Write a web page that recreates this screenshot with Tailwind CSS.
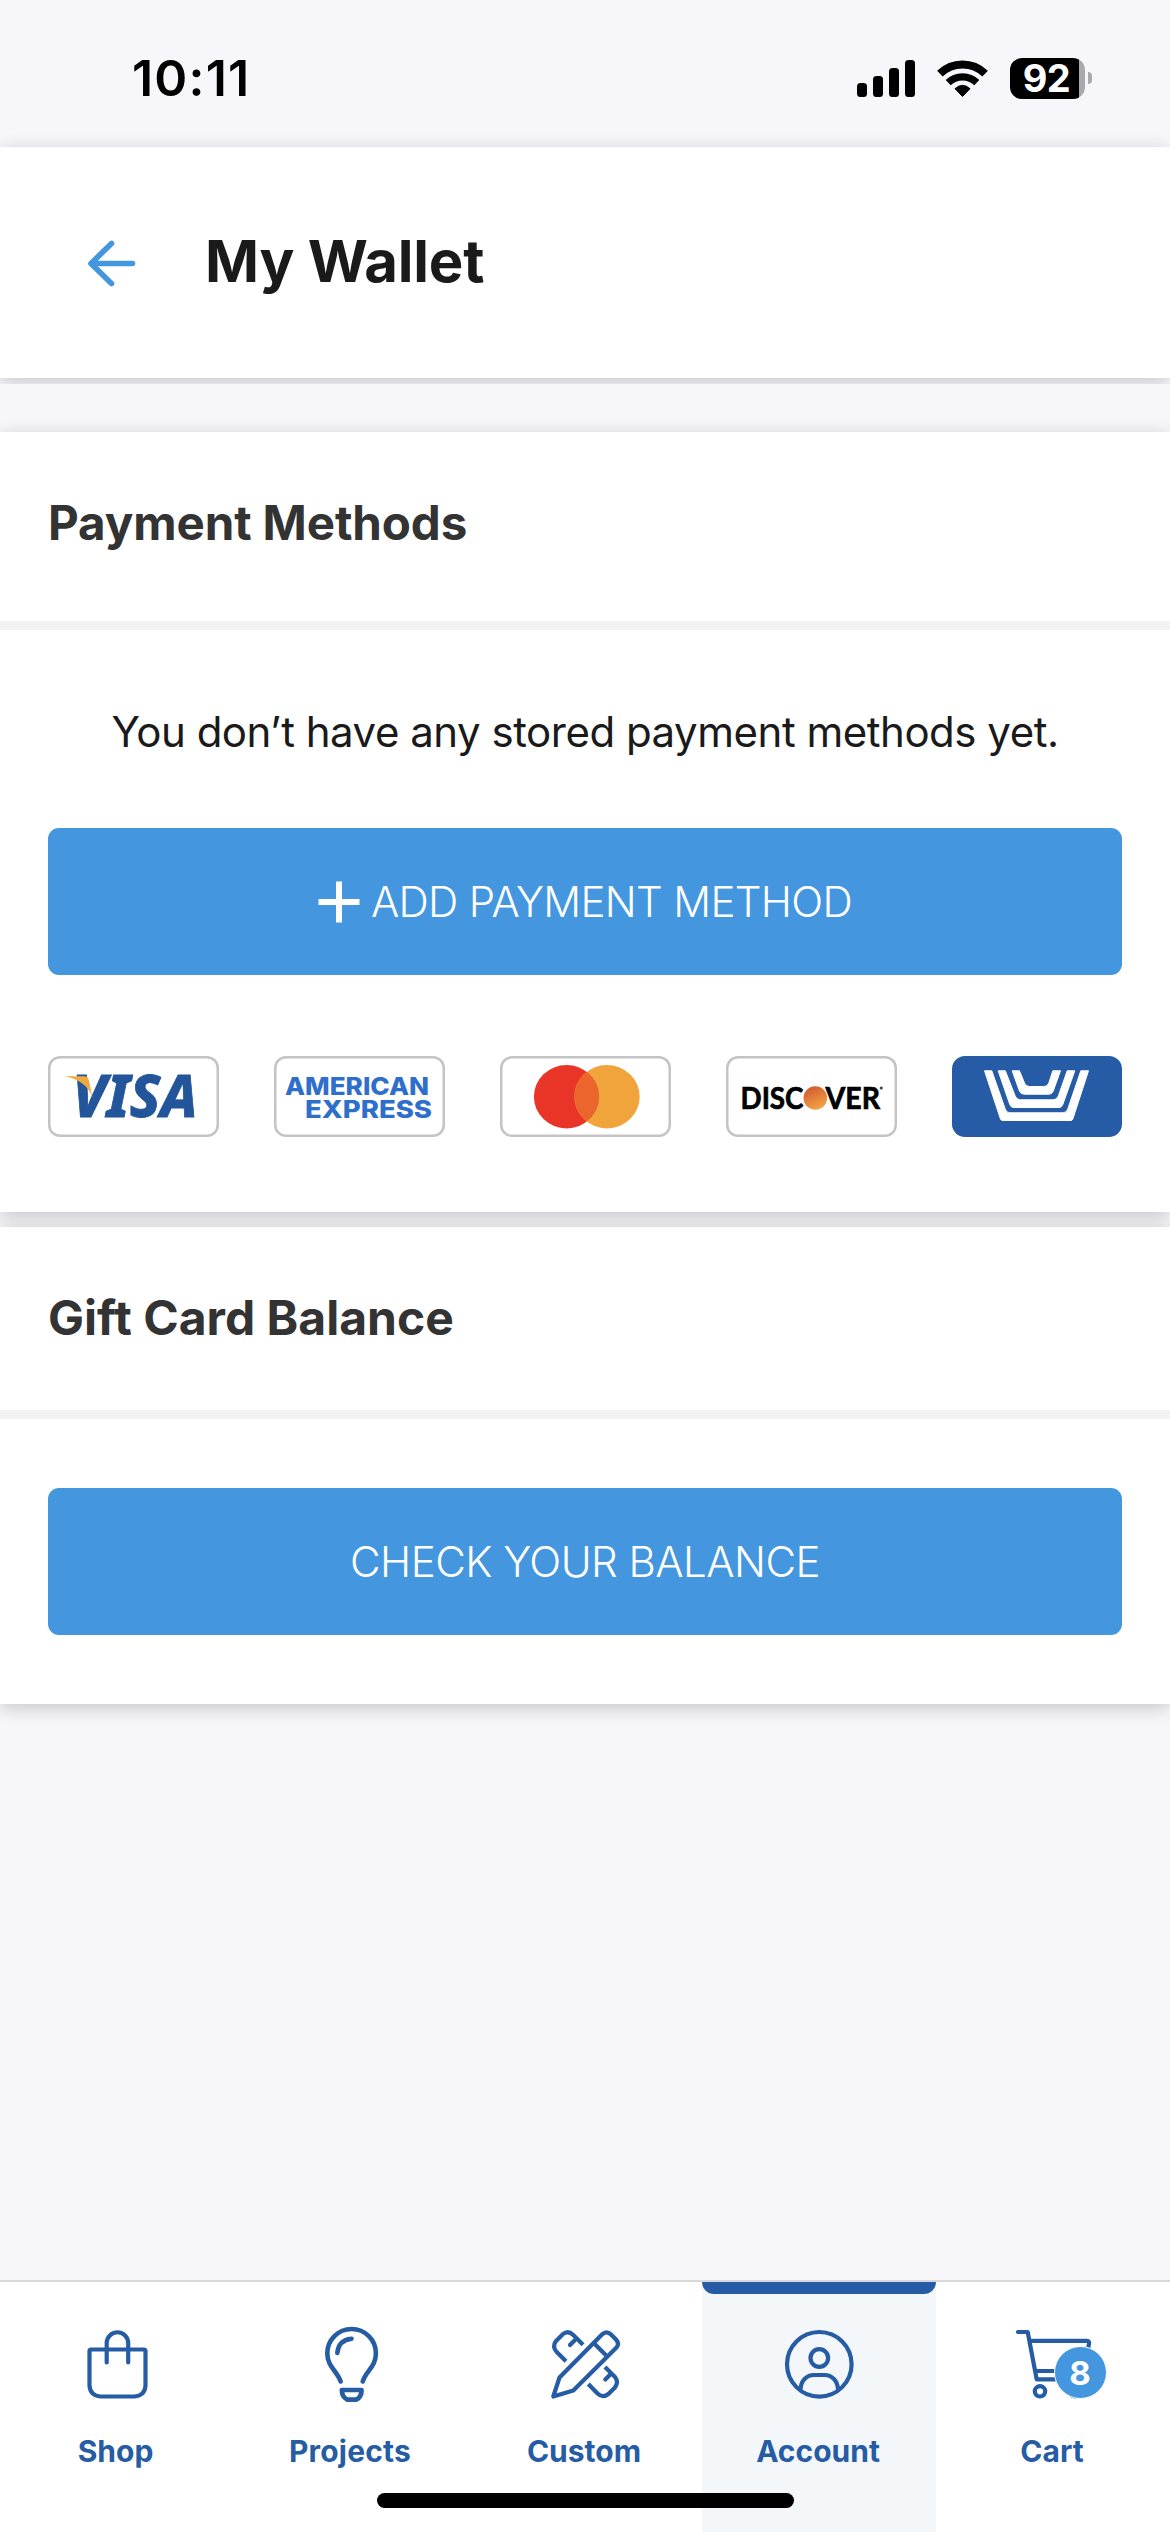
<!DOCTYPE html>
<html lang="en">
<head>
<meta charset="utf-8">
<title>My Wallet</title>
<script src="https://cdn.jsdelivr.net/npm/@tailwindcss/browser@4"></script>
</head>
<body class="w-[1170px] h-[2532px] overflow-hidden bg-[#f6f6fb] font-['Inter',sans-serif] flex flex-col">

  <!-- Status bar and page header -->
  <div class="h-[384px] shrink-0 overflow-hidden flex flex-col">
    <div class="h-[147px] shrink-0 flex items-center justify-between pl-[132px] pr-[78px] pt-[9px]">
      <span class="text-[50px] leading-[60px] font-semibold tracking-[1.2px] text-black">10:11</span>
      <div class="flex items-center">
        <svg class="w-[58px] h-[38px] mr-[22px]" viewBox="0 0 58 38">
          <rect x="0" y="24" width="10" height="14" rx="3.5"/><rect x="16" y="17" width="10" height="21" rx="3.5"/><rect x="32" y="9" width="10" height="29" rx="3.5"/><rect x="48" y="1" width="10" height="37" rx="3.5"/>
        </svg>
        <svg class="w-[51px] h-[38px] mr-[22px]" viewBox="0 0 51 38" fill="none" stroke="#000">
          <path d="M2.9 14.6A32.5 32.5 0 0 1 48.1 14.6" stroke-width="8"/>
          <path d="M11.2 23.7A20.5 20.5 0 0 1 39.8 23.7" stroke-width="7.2"/>
          <path d="M25.5 37.5L18 29.7Q25.500 23 33 29.700Z" fill="#000" stroke-width="1" stroke-linejoin="round"/>
        </svg>
        <div class="flex items-center gap-[3px]">
          <div class="w-[75px] h-[41px] rounded-[12px] bg-linear-to-r from-black from-[92%] to-[#a9a9ad] to-[92%] flex items-center justify-center text-white text-[38px] leading-none font-bold pr-[2px] tracking-[-0.5px]">92</div>
          <div class="w-[4px] h-[12px] rounded-r-full bg-[#a9a9ad]"></div>
        </div>
      </div>
    </div>
    <header class="h-[231px] shrink-0 bg-white shadow-[0_4px_18px_rgba(0,0,0,0.2)] flex items-center pl-[87px]">
      <svg class="w-[50px] h-[50px]" viewBox="0 0 50 50" fill="none" stroke="#4497df" stroke-width="5.6" stroke-linecap="round" stroke-linejoin="round">
        <path d="M45.500 25.500H4M24.500 5.500L4 25.500L24.500 45.500"/>
      </svg>
      <h1 class="ml-[68px] mb-[3px] text-[58px] leading-[70px] font-bold tracking-[-0.2px] text-[#1a1a1a]">My Wallet</h1>
    </header>
  </div>

  <main class="flex-1 pt-12 flex flex-col gap-[15px]">
    <!-- Payment methods -->
    <section class="shadow-[0_4px_18px_rgba(0,0,0,0.2)]">
      <div class="relative z-10 bg-white h-[780px]">
        <div class="h-[198px] border-b-[9px] border-[#f3f3f4] flex items-center px-12 pb-[7px]">
          <h2 class="text-[47.500px] leading-[58px] font-bold tracking-[-0.1px] text-[#333334]">Payment Methods</h2>
        </div>
        <div class="px-12 pt-[76px]">
          <p class="text-center text-[42px] leading-[52px] tracking-[-0.48px] text-[#1a1a1a]">You don’t have any stored payment methods yet.</p>
          <button class="mt-[70px] w-full h-[147px] rounded-[11px] bg-[#4497df] text-white flex items-center justify-center gap-[11px]">
            <svg class="w-[42px] h-[42px]" viewBox="0 0 42 42" stroke="#fff" stroke-width="6"><path d="M0.500 21H41.500M21 0.500V41.500"/></svg>
            <span class="text-[42px] leading-[52px] font-[350] tracking-[-0.65px]">ADD PAYMENT METHOD</span>
          </button>
          <div class="mt-[81px] flex justify-between">
            <!-- Visa -->
            <div class="w-[171px] h-[81px] rounded-[12px] shadow-[inset_0_0_0_2.5px_#c4c4c4]">
              <svg class="w-[171px] h-[81px]" viewBox="0 0 171 81">
                <text x="24.500" y="61" textLength="125" lengthAdjust="spacingAndGlyphs" class="font-['Noto_Sans',sans-serif] font-extrabold italic text-[58px]" fill="#225599" stroke="#225599" stroke-width="0.800">VISA</text>
                <path d="M17 20.200H36Q40 20.200 41 24.500L44.500 42Q40 25.500 17 20.200Z" fill="#eeab40"/>
              </svg>
            </div>
            <!-- American Express -->
            <div class="w-[171px] h-[81px] rounded-[12px] shadow-[inset_0_0_0_2.5px_#c4c4c4]">
              <svg class="w-[171px] h-[81px] font-['Inter',sans-serif] font-extrabold text-[24px]" viewBox="0 0 171 81" fill="#2e6fcc">
                <text x="11" y="39.300" textLength="144" lengthAdjust="spacingAndGlyphs">AMERICAN</text>
                <text x="31" y="61.500" textLength="127" lengthAdjust="spacingAndGlyphs">EXPRESS</text>
              </svg>
            </div>
            <!-- Mastercard -->
            <div class="w-[171px] h-[81px] rounded-[12px] shadow-[inset_0_0_0_2.5px_#c4c4c4]">
              <svg class="w-[171px] h-[81px]" viewBox="0 0 171 81">
                <ellipse cx="66.600" cy="40.700" rx="32.700" ry="31.700" fill="#e93528"/>
                <ellipse cx="107" cy="40.700" rx="32.700" ry="31.700" fill="#f1a43b"/>
                <path d="M86.800 15.800A32.700 31.700 0 0 1 86.800 65.600A32.700 31.700 0 0 1 86.800 15.800Z" fill="#ec652c"/>
              </svg>
            </div>
            <!-- Discover -->
            <div class="w-[171px] h-[81px] rounded-[12px] shadow-[inset_0_0_0_2.5px_#c4c4c4]">
              <svg class="w-[171px] h-[81px] font-['Lato',sans-serif] font-bold text-[31px]" viewBox="0 0 171 81">
                <defs><linearGradient id="disc" x1="0.300" y1="0" x2="0.700" y2="1"><stop offset="0" stop-color="#d3592f"/><stop offset="1" stop-color="#f4a847"/></linearGradient></defs>
                <g stroke="#000" stroke-width="0.700">
                  <text x="14.500" y="52.500" textLength="63" lengthAdjust="spacingAndGlyphs">DISC</text>
                  <text x="99.500" y="52.500" textLength="54.500" lengthAdjust="spacingAndGlyphs">VER</text>
                </g>
                <circle cx="89.300" cy="42" r="11.800" fill="url(#disc)"/>
                <circle cx="155.300" cy="32" r="1.600" fill="#444"/>
              </svg>
            </div>
            <!-- Store card -->
            <div class="w-[170px] h-[81px] rounded-[13px] bg-[#265ca6]">
              <svg class="w-[170px] h-[81px]" viewBox="0 0 170 81" fill="#fff" stroke="#fff" stroke-width="1" stroke-linejoin="round">
                <path d="M32.500 14.800H39.800L53.200 52.900Q54.300 56.800 58 56.800H111Q114.700 56.800 115.800 52.900L128.800 14.800H136.500L121 62.500Q120.300 64.500 119 64.500H50.300Q49 64.500 48.300 62.500Z"/>
                <path d="M46.200 14.800H53.300L63.200 40Q64.500 43.800 68.500 43.800H101Q104.800 43.800 106.300 40L115.200 14.800H122.800L110.800 48.500Q109.800 51.500 107 51.500H62Q58.800 51.500 57.800 48.500Z"/>
                <path d="M60.200 14.800H67.500L72.500 27Q74 30.500 77.500 30.500H92Q95.500 30.500 96.800 27L100.800 14.800H108.500L101.200 35.200Q100 38.200 97 38.200H72.300Q68.800 38.200 67.500 35.200Z"/>
              </svg>
            </div>
          </div>
        </div>
      </div>
    </section>

    <!-- Gift card balance -->
    <section class="shadow-[0_4px_18px_rgba(0,0,0,0.2)]">
      <div class="relative z-10 bg-white h-[477px]">
        <div class="h-[192px] border-b-[9px] border-[#f3f3f4] flex items-center px-12 pb-px">
          <h2 class="text-[48px] leading-[58px] font-bold text-[#333334]">Gift Card Balance</h2>
        </div>
        <div class="px-12 pt-[69px]">
          <button class="w-full h-[147px] rounded-[11px] bg-[#4497df] text-white text-[42px] leading-[52px] font-[350] tracking-[-0.5px]">CHECK YOUR BALANCE</button>
        </div>
      </div>
    </section>
  </main>

  <!-- Tab bar -->
  <nav class="relative h-[252px] shrink-0 border-t-2 border-[#d8d9da] bg-white grid grid-cols-5 text-[#265ca4] text-[30px] leading-[36px] font-bold text-center">
    <a class="pt-[38px] flex flex-col">
      <svg class="w-[234px] h-[90px]" viewBox="0 0 234 90" fill="none" stroke="currentColor" stroke-width="4.200" stroke-linecap="round" stroke-linejoin="round">
        <path d="M91 29.500H144Q145.500 29.500 145.500 31V65.500Q145 75.500 134.500 76.500H100.500Q90 75.500 89.500 65.500V31Q89.500 29.500 91 29.500Z"/>
        <path d="M106.700 42.500V23a10.750 10.750 0 0 1 21.500 0V42.500"/>
      </svg>
      <span class="mt-[23px] -ml-[3px]">Shop</span>
    </a>
    <a class="pt-[38px] flex flex-col">
      <svg class="w-[234px] h-[90px]" viewBox="0 0 234 90" fill="none" stroke="currentColor" stroke-width="4.600" stroke-linecap="round" stroke-linejoin="round">
        <path d="M106.700 61.500C103 50.500 93.300 47 93.300 33.300A24.300 24.300 0 0 1 141.900 33.300C141.900 47 132 50.500 128.700 61.500"/>
        <path d="M103.300 33Q104.500 20 117.500 18.700"/>
        <path d="M107.800 70H127.600Q127.800 76.500 122.500 79.600H113Q107.800 76.500 107.800 70Z"/>
      </svg>
      <span class="mt-[23px] -ml-[2px] tracking-[0.2px]">Projects</span>
    </a>
    <a class="pt-[38px] flex flex-col">
      <svg class="w-[234px] h-[90px]" viewBox="0 0 234 90" fill="none" stroke="currentColor" stroke-width="4.200" stroke-linecap="round" stroke-linejoin="round">
        <path d="M85.300 76.500L91.500 57.500L134 14.500Q138.500 10 143 14.500L148 19.500Q152 24 148 28L105.300 70.500Z"/>
        <path d="M126 23.300L138.700 36"/>
        <path stroke-linecap="butt" d="M115 24.700L105 14.700Q100 10 94.800 14.200L87.800 21.200Q84 26.500 88.700 32L98 41.200"/><path d="M106.500 20.500L102 25"/>
        <path stroke-linecap="butt" d="M137 47L147 57Q151 62 147 67.500L140.300 74Q134.700 78.500 129.500 73.500L120.300 64"/><path d="M142 54.700L137.300 59.400"/>
      </svg>
      <span class="mt-[23px] -ml-[2px]">Custom</span>
    </a>
    <a class="bg-[#f3f7fa] flex flex-col">
      <span class="h-[12px] rounded-b-[12px] bg-[#265ca6]"></span>
      <svg class="mt-[26px] w-[234px] h-[90px]" viewBox="0 0 234 90" fill="none" stroke="currentColor" stroke-width="4.200" stroke-linecap="round" stroke-linejoin="round">
        <circle cx="117.300" cy="44.300" r="32.300"/><circle cx="117.300" cy="38" r="8.800"/>
        <path d="M98.500 69C99 60.500 105 55 112 55H122.600C129.500 55 135.500 60.500 136 69"/>
      </svg>
      <span class="mt-[23px] -ml-[2px]">Account</span>
    </a>
    <a class="pt-[38px] flex flex-col">
      <div class="relative">
        <svg class="w-[234px] h-[90px]" viewBox="0 0 234 90" fill="none" stroke="currentColor" stroke-width="4.200" stroke-linecap="round" stroke-linejoin="round">
          <path d="M82 12H91.700L100.700 59.300H140"/>
          <path d="M94 20.800H151Q153.500 20.800 153 24L147 51H99.500"/>
          <circle cx="104" cy="71.300" r="5.200"/><circle cx="139" cy="71.300" r="5.200"/>
        </svg>
        <span class="absolute left-[117.500px] top-[25.500px] size-[53px] rounded-full bg-[#4497df] border border-white text-white text-[33px] leading-[53px]">8</span>
      </div>
      <span class="mt-[23px] -ml-[2px]">Cart</span>
    </a>
    <div class="absolute left-[377px] top-[211px] w-[417px] h-[15px] rounded-full bg-black"></div>
  </nav>
</body>
</html>
